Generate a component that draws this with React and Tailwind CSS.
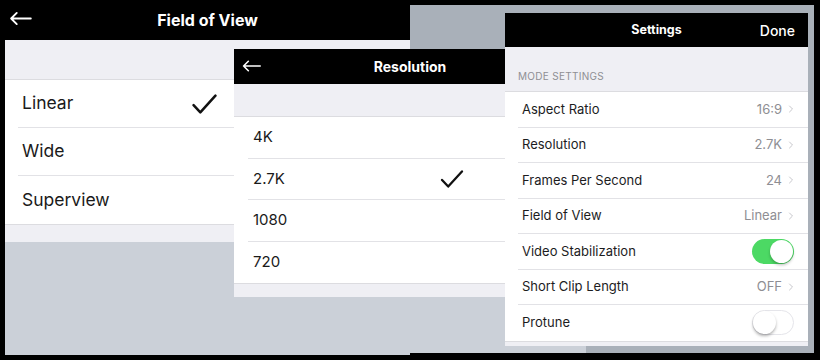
import { ChevronRight } from 'lucide-react'

const font = { fontFamily: 'Inter, "Noto Sans", sans-serif' }

const BackArrow = ({ className }) => (
  <svg className={className} viewBox="0 0 24 16" fill="none" stroke="white" strokeWidth="2" strokeLinecap="round" strokeLinejoin="round">
    <path d="M23 8H2M8 2L2 8l6 6" />
  </svg>
)

const Check = ({ className }) => (
  <svg className={className} viewBox="0 0 24 19" fill="none" stroke="#111" strokeWidth="2.4" strokeLinecap="round" strokeLinejoin="round">
    <path d="M1.5 10.5l6.5 7L22.5 1.5" />
  </svg>
)

const Toggle = ({ on }) => (
  <div
    className={
      on
        ? 'relative w-[42px] h-[25px] rounded-full bg-[#4cd964]'
        : 'relative w-[42px] h-[25px] rounded-full bg-white border border-[#e5e5ea]'
    }
  >
    <div
      className={
        on
          ? 'absolute top-[1px] right-[1px] w-[23px] h-[23px] rounded-full bg-white shadow-[0_2px_3px_rgba(0,0,0,0.25)]'
          : 'absolute top-0 left-0 w-[23px] h-[23px] rounded-full bg-white shadow-[0_2px_3px_rgba(0,0,0,0.3)]'
      }
    />
  </div>
)

const fovRows = [
  { label: 'Linear', checked: true },
  { label: 'Wide' },
  { label: 'Superview' },
]

const resRows = [
  { label: '4K' },
  { label: '2.7K', checked: true },
  { label: '1080' },
  { label: '720' },
]

const settingRows = [
  { label: 'Aspect Ratio', value: '16:9' },
  { label: 'Resolution', value: '2.7K' },
  { label: 'Frames Per Second', value: '24' },
  { label: 'Field of View', value: 'Linear' },
  { label: 'Video Stabilization', toggle: true, on: true },
  { label: 'Short Clip Length', value: 'OFF' },
  { label: 'Protune', toggle: true, on: false },
]

export default function App() {
  return (
    <div className="relative w-[820px] h-[360px] bg-black overflow-hidden" style={font}>
      {/* Field of View screenshot */}
      <div className="absolute left-[5px] top-0 w-[405px] h-[355px] bg-[#cbd0d8] flex flex-col">
        <div className="relative h-[40px] bg-black flex items-center justify-center shrink-0">
          <BackArrow className="absolute left-[4px] top-[11px] w-[23px] h-[15px]" />
          <span className="text-white font-bold text-[16px]">Field of View</span>
        </div>
        <div className="h-[40px] bg-[#efeff4] border-b border-[#dcdce0] shrink-0" />
        <div className="bg-white">
          {fovRows.map((r, i) => (
            <div key={r.label} className="pl-[13px]">
              <div
                className={
                  i < fovRows.length - 1
                    ? 'h-[48px] flex items-center justify-between border-b border-[#e2e2e6] pr-[193px]'
                    : 'h-[48px] flex items-center justify-between pr-[193px]'
                }
              >
                <span className="pl-[4px] text-[17.5px] text-[#1a1a1a]">{r.label}</span>
                {r.checked && <Check className="w-[25px] h-[20px]" />}
              </div>
            </div>
          ))}
        </div>
        <div className="h-[18px] bg-[#efeff4] border-t border-[#dcdce0] shrink-0" />
      </div>

      {/* dimmed backdrop of the settings screenshot */}
      <div className="absolute left-[410px] top-[5px] w-[404px] h-[348px] bg-[#a9b0b9]" />

      {/* Resolution screenshot */}
      <div className="absolute left-[234px] top-[49px] w-[352px] h-[304px] bg-[#cbd0d8] flex flex-col">
        <div className="relative h-[35px] bg-black flex items-center justify-center shrink-0">
          <BackArrow className="absolute left-[8px] top-[10px] w-[19px] h-[14px]" />
          <span className="text-white font-bold text-[14px]">Resolution</span>
        </div>
        <div className="h-[33px] bg-[#efeff4] border-b border-[#dcdce0] shrink-0" />
        <div className="bg-white">
          {resRows.map((r, i) => (
            <div key={r.label} className="pl-[14px]">
              <div
                className={
                  i < resRows.length - 1
                    ? 'h-[41.5px] flex items-center justify-between border-b border-[#e2e2e6] pr-[122px]'
                    : 'h-[41.5px] flex items-center justify-between pr-[122px]'
                }
              >
                <span className="pl-[5px] text-[15px] text-[#1a1a1a]">{r.label}</span>
                {r.checked && <Check className="w-[24px] h-[18px]" />}
              </div>
            </div>
          ))}
        </div>
        <div className="h-[14px] bg-[#efeff4] border-t border-[#dcdce0] shrink-0" />
      </div>

      {/* Settings sheet */}
      <div className="absolute left-[505px] top-[13px] w-[303px] h-[333px] bg-[#efeff4] flex flex-col">
        <div className="relative h-[34px] bg-black flex items-center justify-center shrink-0">
          <span className="text-white font-bold text-[12.5px]">Settings</span>
          <span className="absolute right-[13px] text-white text-[14px] font-medium">Done</span>
        </div>
        <div className="h-[45px] flex items-end pb-[7px] pl-[13px] border-b border-[#dcdce0] shrink-0">
          <span className="text-[10px] tracking-[0.3px] text-[#8e8e93]">MODE SETTINGS</span>
        </div>
        <div className="bg-white">
          {settingRows.map((r, i) => (
            <div key={r.label} className="pl-[13px]">
              <div
                className={
                  i < settingRows.length - 1
                    ? 'h-[35.5px] flex items-center justify-between border-b border-[#e2e2e6] pl-[4px] pr-[14px]'
                    : 'h-[35.5px] flex items-center justify-between pl-[4px] pr-[14px]'
                }
              >
                <span className="text-[13px] text-[#1c1c1e]">{r.label}</span>
                {r.toggle ? (
                  <Toggle on={r.on} />
                ) : (
                  <span className="flex items-center gap-[3px] text-[13px] text-[#8e8e93]">
                    {r.value}
                    <ChevronRight className="w-[12px] h-[12px] text-[#c7c7cc] -mr-[3px]" strokeWidth={2} />
                  </span>
                )}
              </div>
            </div>
          ))}
        </div>
        <div className="flex-1 border-t border-[#dcdce0]" />
      </div>
    </div>
  )
}
